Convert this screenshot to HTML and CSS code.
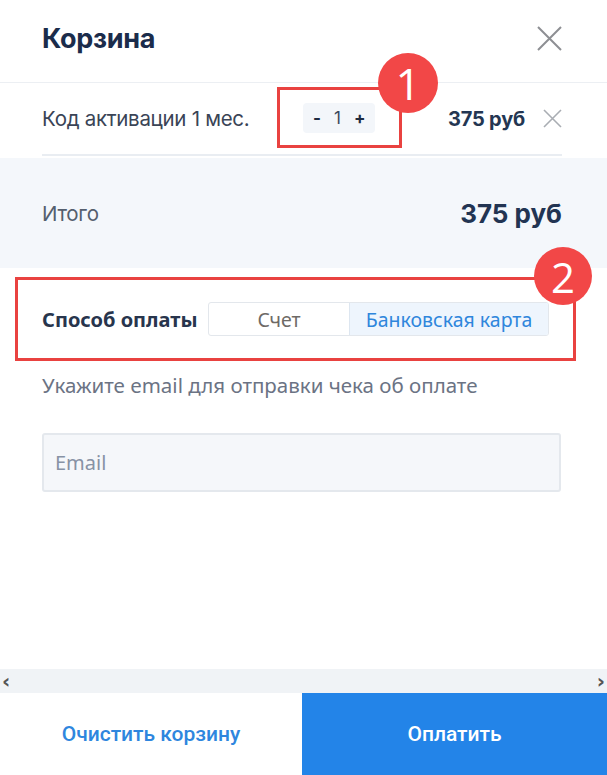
FILE: index.html
```html
<!DOCTYPE html>
<html lang="ru">
<head>
<meta charset="utf-8">
<title>Корзина</title>
<link rel="stylesheet" href="styles.css">
</head>
<body>
<div class="cart">
  <header class="cart-header">
    <h1 class="cart-title">Корзина</h1>
    <button class="close-btn" aria-label="Закрыть">
      <svg width="25" height="25" viewBox="0 0 25 25"><path d="M1 1L24 24M24 1L1 24" stroke="#8d8f93" stroke-width="2" fill="none"/></svg>
    </button>
  </header>

  <div class="item-row">
    <span class="item-name">Код активации 1 мес.</span>
    <div class="mark mark-qty">
      <div class="qty">
        <span class="qty-btn">-</span>
        <span class="qty-val">1</span>
        <span class="qty-btn">+</span>
      </div>
      <span class="badge badge-1">1</span>
    </div>
    <span class="item-price">375 руб</span>
    <button class="remove-btn" aria-label="Удалить">
      <svg width="19" height="19" viewBox="0 0 19 19"><path d="M1 1L18 18M18 1L1 18" stroke="#a9adb3" stroke-width="1.6" fill="none"/></svg>
    </button>
  </div>

  <div class="total">
    <span class="total-label">Итого</span>
    <span class="total-sum">375 руб</span>
  </div>

  <div class="mark mark-pay">
    <span class="pay-label">Способ оплаты</span>
    <div class="segmented">
      <span class="seg">Счет</span>
      <span class="seg seg-active">Банковская карта</span>
    </div>
    <span class="badge badge-2">2</span>
  </div>

  <p class="note">Укажите email для отправки чека об оплате</p>
  <div class="email-field"><span class="placeholder">Email</span></div>

  <div class="spacer"></div>

  <div class="hscroll">
    <span class="arrow">&#x2039;</span>
    <span class="arrow">&#x203A;</span>
  </div>

  <footer class="cart-footer">
    <button class="btn-clear">Очистить корзину</button>
    <button class="btn-pay">Оплатить</button>
  </footer>
</div>
</body>
</html>
```

FILE: styles.css
```css
* { box-sizing: border-box; }
html, body { margin: 0; padding: 0; background: #fff; }
body { font-family: Inter, "Noto Sans", sans-serif; }

.cart {
  width: 607px;
  height: 775px;
  display: flex;
  flex-direction: column;
  overflow: hidden;
}

.cart-header {
  height: 83px;
  flex: none;
  display: flex;
  align-items: center;
  justify-content: space-between;
  padding: 0 45px 5px 42px;
  border-bottom: 1px solid #eceff3;
}
.cart-title {
  margin: 0;
  font-family: Inter, sans-serif;
  font-size: 27px;
  font-weight: 700;
  color: #1b2c4b;
  letter-spacing: -0.3px;
}
.close-btn, .remove-btn {
  border: 0;
  background: none;
  padding: 0;
  display: flex;
  cursor: pointer;
}

.item-row {
  flex: none;
  height: 73px;
  margin: 0 45px 0 42px;
  display: flex;
  align-items: center;
  border-bottom: 2px solid #e9edf2;
}
.item-name {
  width: 235px;
  font-size: 20.5px;
  color: #3a4456;
  letter-spacing: -0.3px;
  white-space: nowrap;
}
.mark {
  position: relative;
  border: 3px solid #e94240;
}
.mark-qty {
  width: 125px;
  height: 61px;
  margin-top: -2px;
  display: flex;
  align-items: center;
  padding-left: 23px;
}
.qty {
  display: flex;
  align-items: center;
  gap: 13px;
  height: 30px;
  padding: 0 10px 0 10px;
  background: #f3f6fa;
  border-radius: 4px;
  font-size: 17px;
  color: #1e2b40;
}
.qty-btn { font-weight: 700; }
.qty-val { color: #3b465a; }

.badge {
  position: absolute;
  border-radius: 50%;
  background: #f24747;
  color: #fff;
  display: flex;
  align-items: center;
  justify-content: center;
  font-family: "Open Sans", sans-serif;
}
.badge-1 {
  width: 60px;
  height: 60px;
  left: 98px;
  top: -37px;
  font-size: 44px;
}
.badge-2 {
  width: 58px;
  height: 58px;
  left: 516px;
  top: -33px;
  font-size: 42px;
}

.item-price {
  margin-left: auto;
  font-size: 20px;
  font-weight: 700;
  letter-spacing: -0.2px;
  color: #243652;
}
.remove-btn { margin-left: 18px; }

.total {
  flex: none;
  height: 110px;
  margin-top: 2px;
  background: #f4f7fb;
  display: flex;
  align-items: center;
  justify-content: space-between;
  padding: 0 45px 0 42px;
}
.total-label {
  font-size: 20.5px;
  color: #555f6e;
  letter-spacing: -0.3px;
}
.total-sum {
  font-size: 26px;
  font-weight: 700;
  color: #223452;
}

.mark-pay {
  flex: none;
  margin: 9px 31px 0 15px;
  height: 84px;
  display: flex;
  align-items: center;
  padding-left: 24px;
  font-family: "Noto Sans", sans-serif;
}
.pay-label {
  font-size: 20px;
  font-weight: 700;
  color: #28354d;
  width: 166px;
  white-space: nowrap;
}
.segmented {
  display: flex;
  height: 34px;
  border: 1px solid #e3e7ec;
  border-radius: 3px;
  overflow: hidden;
}
.seg {
  display: flex;
  align-items: center;
  justify-content: center;
  font-size: 19.5px;
  color: #6e6a66;
  white-space: nowrap;
}
.seg:first-child { width: 140px; }
.seg-active {
  width: 199px;
  background: #eef5fd;
  color: #2f86dc;
  border-left: 1px solid #dde6f0;
}

.note {
  flex: none;
  margin: 12px 0 0 42px;
  font-family: "Noto Sans", sans-serif;
  font-size: 20.5px;
  color: #6b7384;
  line-height: 24px;
  white-space: nowrap;
}

.email-field {
  flex: none;
  margin: 36px 46px 0 42px;
  height: 59px;
  background: #f5f7fa;
  border: 2px solid #e4e8ed;
  border-radius: 3px;
  display: flex;
  align-items: center;
  padding-left: 11px;
}
.placeholder {
  font-family: "Noto Sans", sans-serif;
  font-size: 20px;
  color: #8792a5;
}

.spacer { flex: 1; }

.hscroll {
  flex: none;
  height: 24px;
  background: #f0f3f6;
  display: flex;
  align-items: center;
  justify-content: space-between;
  padding: 0 2px;
}
.arrow {
  font-family: "DejaVu Sans", sans-serif;
  font-size: 20px;
  font-weight: 700;
  color: #555;
  line-height: 1;
}

.cart-footer {
  flex: none;
  height: 82px;
  display: flex;
}
.cart-footer button {
  border: 0;
  font-family: Roboto, sans-serif;
  font-size: 21px;
  font-weight: 500;
  cursor: pointer;
}
.btn-clear {
  width: 302px;
  background: #fff;
  color: #2e86de;
}
.btn-pay {
  flex: 1;
  background: #2384e8;
  color: #fff;
}
```
